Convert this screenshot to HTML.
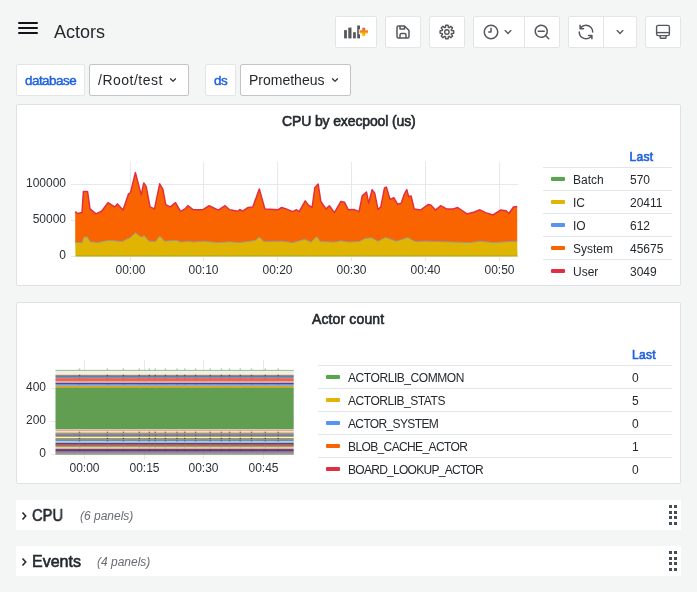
<!DOCTYPE html>
<html><head><meta charset="utf-8">
<style>
*{box-sizing:border-box;margin:0;padding:0}
html,body{width:697px;height:592px;overflow:hidden;background:#f4f5f5;font-family:"Liberation Sans",sans-serif;color:#24292e}
.abs{position:absolute}
.btn{position:absolute;top:16px;height:32px;background:#fff;border:1px solid #e4e5e6;border-radius:2px}
.sep{position:absolute;top:0;bottom:0;width:1px;background:#e4e5e6}
.panel{position:absolute;left:16px;width:665px;background:#fff;border:1px solid #e0e1e2;border-radius:2px}
.t{position:absolute;white-space:nowrap;line-height:1;will-change:transform}
.lbl{position:absolute;top:64px;height:32px;background:#fff;border:1px solid #e4e5e6;border-radius:2px}
.dd{position:absolute;top:64px;height:32px;background:#fff;border:1px solid #c2c4c6;border-radius:2px}
.row{position:absolute;left:16px;width:665px;height:30px;background:#fff}
.ic{position:absolute;fill:#464c54}
svg{overflow:visible}
.top{will-change:transform}
.ax{font-size:12px;fill:#2c3136;font-family:"Liberation Sans",sans-serif}
.lg{font-size:12px;fill:#24292e;font-family:"Liberation Sans",sans-serif}
</style></head><body>
<!-- header -->
<div class="abs" style="left:18px;top:22px;width:20px;height:2px;background:#111418;border-radius:1px"></div>
<div class="abs" style="left:18px;top:27px;width:20px;height:2px;background:#111418;border-radius:1px"></div>
<div class="abs" style="left:18px;top:32px;width:20px;height:2px;background:#111418;border-radius:1px"></div>
<div class="t" style="left:54px;top:23px;font-size:18px">Actors</div>

<!-- toolbar -->
<div class="btn" style="left:335px;width:42px"></div>
<div class="btn" style="left:385px;width:36px"></div>
<div class="btn" style="left:429px;width:36px"></div>
<div class="btn" style="left:473px;width:87px"><div class="sep" style="left:50px"></div></div>
<div class="btn" style="left:568px;width:69px"><div class="sep" style="left:34px"></div></div>
<div class="btn" style="left:645px;width:36px"></div>

<!-- variables -->
<div class="lbl" style="left:16px;width:69px"></div>
<div class="t" style="left:25px;top:73.5px;font-size:13.4px;-webkit-text-stroke:0.45px #1f62e0;color:#1f62e0;letter-spacing:-0.5px">database</div>
<div class="dd" style="left:89px;width:100px"></div>
<div class="t" style="left:98px;top:73px;font-size:14px;letter-spacing:0.5px">/Root/test</div>
<div class="lbl" style="left:205px;width:31px"></div>
<div class="t" style="left:214px;top:73.5px;font-size:13.4px;-webkit-text-stroke:0.45px #1f62e0;color:#1f62e0;letter-spacing:-0.5px">ds</div>
<div class="dd" style="left:240px;width:111px"></div>
<div class="t" style="left:249px;top:73px;font-size:14px">Prometheus</div>

<!-- panel 1 -->
<div class="panel" style="top:104px;height:182px"></div>
<div class="t" style="left:282px;top:114px;font-size:14px;-webkit-text-stroke:0.6px #24292e;letter-spacing:-0.13px">CPU by execpool (us)</div>

<!-- panel 2 -->
<div class="panel" style="top:302px;height:182px"></div>
<div class="t" style="left:312px;top:312px;font-size:14px;-webkit-text-stroke:0.6px #24292e;letter-spacing:0.13px">Actor count</div>

<!-- rows -->
<div class="row" style="top:500px"></div>
<div class="t" style="left:32px;top:508px;font-size:16px;-webkit-text-stroke:0.6px #24292e;transform:scaleX(0.92);transform-origin:0 0">CPU</div>
<div class="t" style="left:80px;top:510px;font-size:12px;font-style:italic;color:#686c70">(6 panels)</div>
<div class="row" style="top:546px"></div>
<div class="t" style="left:32px;top:554px;font-size:16px;-webkit-text-stroke:0.6px #24292e">Events</div>
<div class="t" style="left:97px;top:556px;font-size:12px;font-style:italic;color:#686c70">(4 panels)</div>

<svg class="abs top" style="left:0;top:0" width="697" height="592" viewBox="0 0 697 592">
<!-- toolbar icons -->
<g>
 <rect x="344.1" y="30.1" width="2.8" height="8.3" fill="#54585d"/>
 <rect x="348.3" y="27.6" width="3.2" height="10.8" fill="#54585d"/>
 <rect x="353.1" y="32.2" width="2.7" height="6.2" fill="#54585d"/>
 <rect x="357.2" y="25.5" width="2.8" height="12.9" fill="#54585d"/>
 <defs><linearGradient id="og" x1="0" y1="0" x2="0" y2="1"><stop offset="0" stop-color="#F05A28"/><stop offset="1" stop-color="#FBCA0A"/></linearGradient></defs>
 <rect x="358.8" y="29.3" width="1.6" height="5" fill="#fff"/>
 <rect x="359.5" y="30.4" width="8.5" height="3" fill="url(#og)"/>
 <rect x="362.2" y="27.8" width="3" height="8.2" fill="url(#og)"/>
</g>
<svg x="394" y="23" width="18" height="18" viewBox="0 0 24 24"><path fill="#54585d" d="M20.71,9.29l-6-6a1,1,0,0,0-.32-.21A1.09,1.09,0,0,0,14,3H6A3,3,0,0,0,3,6V18a3,3,0,0,0,3,3H18a3,3,0,0,0,3-3V10A1,1,0,0,0,20.71,9.29ZM9,5h4V7H9Zm6,14H9V16a1,1,0,0,1,1-1h4a1,1,0,0,1,1,1Zm4-1a1,1,0,0,1-1,1H17V16a3,3,0,0,0-3-3H10a3,3,0,0,0-3,3v3H6a1,1,0,0,1-1-1V6A1,1,0,0,1,6,5H7V8A1,1,0,0,0,8,9h6a1,1,0,0,0,1-1V6.41l4,4Z"/></svg>
<g fill="none" stroke="#54585d" stroke-width="1.4" stroke-linejoin="round"><path d="M445.02,27.47 L445.47,27.31 L445.70,25.20 L448.10,25.20 L448.33,27.31 L448.78,27.47 L449.20,27.67 L450.86,26.35 L452.55,28.04 L451.23,29.70 L451.43,30.12 L451.59,30.57 L453.70,30.80 L453.70,33.20 L451.59,33.43 L451.43,33.88 L451.23,34.30 L452.55,35.96 L450.86,37.65 L449.20,36.33 L448.78,36.53 L448.33,36.69 L448.10,38.80 L445.70,38.80 L445.47,36.69 L445.02,36.53 L444.60,36.33 L442.94,37.65 L441.25,35.96 L442.57,34.30 L442.37,33.88 L442.21,33.43 L440.10,33.20 L440.10,30.80 L442.21,30.57 L442.37,30.12 L442.57,29.70 L441.25,28.04 L442.94,26.35 L444.60,27.67 Z"/><circle cx="446.9" cy="32" r="2.2"/></g>
<svg x="482" y="23" width="18" height="18" viewBox="0 0 24 24"><path fill="#54585d" d="M12,2A10,10,0,1,0,22,12,10.01114,10.01114,0,0,0,12,2Zm0,18a8,8,0,1,1,8-8A8.00917,8.00917,0,0,1,12,20Zm0-14a1,1,0,0,0-1,1v4H9a1,1,0,0,0,0,2h3a1,1,0,0,0,1-1V7A1,1,0,0,0,12,6Z"/></svg>
<svg x="500" y="24" width="16" height="16" viewBox="0 0 24 24"><path fill="#54585d" d="M17,9.17a1,1,0,0,0-1.41,0L12,12.71,8.46,9.17a1,1,0,0,0-1.41,0,1,1,0,0,0,0,1.42l4.24,4.24a1,1,0,0,0,1.42,0L17,10.59A1,1,0,0,0,17,9.17Z"/></svg>
<svg x="533" y="23" width="18" height="18" viewBox="0 0 24 24"><path fill="#54585d" d="M21.71,20.29,18,16.61A9,9,0,1,0,16.61,18l3.68,3.68a1,1,0,0,0,1.42,0A1,1,0,0,0,21.71,20.29ZM11,18a7,7,0,1,1,7-7A7,7,0,0,1,11,18Zm4-8H7a1,1,0,0,0,0,2h8a1,1,0,0,0,0-2Z"/></svg>
<svg x="577" y="23" width="18" height="18" viewBox="0 0 24 24"><path fill="#54585d" d="M19.91,15.51H15.38a1,1,0,0,0,0,2h2.4A8,8,0,0,1,4,12a1,1,0,0,0-2,0,10,10,0,0,0,16.88,7.23V21a1,1,0,0,0,2,0V16.5A1,1,0,0,0,19.91,15.51ZM12,2A10,10,0,0,0,5.12,4.77V3a1,1,0,0,0-2,0V7.5a1,1,0,0,0,1,1h4.5a1,1,0,0,0,0-2H6.22A8,8,0,0,1,20,12a1,1,0,0,0,2,0A10,10,0,0,0,12,2Z"/></svg>
<svg x="612" y="24" width="16" height="16" viewBox="0 0 24 24"><path fill="#54585d" d="M17,9.17a1,1,0,0,0-1.41,0L12,12.71,8.46,9.17a1,1,0,0,0-1.41,0,1,1,0,0,0,0,1.42l4.24,4.24a1,1,0,0,0,1.42,0L17,10.59A1,1,0,0,0,17,9.17Z"/></svg>
<g fill="none" stroke="#54585d" stroke-width="1.4">
 <rect x="656.6" y="25.4" width="12.8" height="10.2" rx="1.6"/>
 <line x1="656.6" y1="32.6" x2="669.4" y2="32.6"/>
 <path d="M660.2,35.6 V37.4 Q660.2,38.2 661,38.2 H665.2 Q666,38.2 666,37.4 V35.6"/>
</g>
<!-- variable chevrons -->
<svg x="166" y="73" width="14" height="14" viewBox="0 0 24 24"><path fill="#24292e" d="M17,9.17a1,1,0,0,0-1.41,0L12,12.71,8.46,9.17a1,1,0,0,0-1.41,0,1,1,0,0,0,0,1.42l4.24,4.24a1,1,0,0,0,1.42,0L17,10.59A1,1,0,0,0,17,9.17Z"/></svg>
<svg x="328" y="73" width="14" height="14" viewBox="0 0 24 24"><path fill="#24292e" d="M17,9.17a1,1,0,0,0-1.41,0L12,12.71,8.46,9.17a1,1,0,0,0-1.41,0,1,1,0,0,0,0,1.42l4.24,4.24a1,1,0,0,0,1.42,0L17,10.59A1,1,0,0,0,17,9.17Z"/></svg>

<!-- chart 1 grid -->
<g stroke="#e8e8ea" stroke-width="1">
 <line x1="71" y1="184.5" x2="518" y2="184.5"/>
 <line x1="71" y1="220.5" x2="518" y2="220.5"/>
 <line x1="71" y1="256.5" x2="518" y2="256.5"/>
 <line x1="130.5" y1="162" x2="130.5" y2="261"/>
 <line x1="203.5" y1="162" x2="203.5" y2="261"/>
 <line x1="277.5" y1="162" x2="277.5" y2="261"/>
 <line x1="351.5" y1="162" x2="351.5" y2="261"/>
 <line x1="425.5" y1="162" x2="425.5" y2="261"/>
 <line x1="499.5" y1="162" x2="499.5" y2="261"/>
</g>
<polygon fill="#FA6400" points="75.2,211.7 77.4,213.6 82.0,212.7 83.4,191.7 87.6,191.7 90.0,209.0 96.0,214.0 101.6,211.4 108.0,202.8 114.6,207.0 117.4,204.0 123.0,210.2 128.5,194.0 130.4,193.0 135.4,172.7 141.2,195.0 143.8,183.0 146.2,186.7 150.0,207.0 154.5,209.0 159.7,183.9 162.9,189.4 165.7,204.7 170.3,207.0 175.5,202.8 180.5,211.4 185.0,209.0 187.8,205.8 193.4,209.9 202.6,209.9 209.1,205.8 218.4,210.2 225.0,205.8 229.6,209.9 238.0,211.4 239.8,209.5 242.6,211.2 248.2,207.6 252.8,207.1 259.3,189.0 264.9,209.0 274.2,209.5 277.9,209.9 281.6,207.6 286.2,209.0 292.7,211.7 296.5,209.9 299.2,211.7 305.2,201.0 308.4,205.2 312.1,207.6 314.9,187.6 318.2,184.2 320.8,201.5 326.0,209.0 329.4,205.8 334.4,212.7 340.9,201.5 344.6,202.4 348.3,209.9 353.9,209.5 359.1,211.7 362.2,196.0 366.5,192.2 368.7,203.4 372.1,189.8 374.7,193.2 378.0,209.5 380.8,207.1 384.5,188.0 386.4,187.2 390.1,199.7 393.8,197.8 397.5,204.3 401.2,203.4 404.0,195.0 406.8,189.8 408.7,196.9 411.1,196.0 414.2,209.0 420.6,210.2 428.0,204.7 430.8,205.2 435.4,210.2 440.6,205.8 446.6,209.0 453.1,209.0 457.7,207.6 467.0,214.0 474.4,212.1 480.0,209.9 485.6,212.7 493.0,215.1 500.5,210.2 506.0,210.8 508.8,213.6 513.5,207.1 517.2,206.5 517.2,242.5 493.0,243.9 480.0,242.5 470.7,243.9 442.9,243.0 426.1,242.5 415.2,242.8 407.7,238.7 396.6,242.5 385.5,238.7 378.0,242.5 371.5,239.1 365.0,239.7 359.4,242.8 348.3,243.4 340.9,242.1 334.4,243.4 320.4,242.8 316.7,237.8 311.1,243.4 304.8,240.6 292.7,243.9 281.6,242.5 264.0,242.8 259.3,238.4 255.6,241.5 250.0,242.5 238.9,243.9 229.6,243.0 218.4,243.9 203.6,242.5 192.4,243.4 188.9,242.5 181.5,243.4 175.9,241.5 164.7,242.5 159.7,237.3 155.5,242.8 149.0,242.5 144.3,236.9 141.2,238.4 135.4,234.0 130.4,238.7 122.0,242.8 109.0,241.5 97.9,243.8 90.0,243.0 87.6,238.2 84.0,238.2 82.0,244.0 75.2,243.4"/>
<polygon fill="#E0B400" points="75.5,256.5 75.2,242.1 82.0,242.7 84.0,236.9 87.6,236.9 90.0,241.7 97.9,242.5 109.0,240.2 122.0,241.5 130.4,237.4 135.4,232.7 141.2,237.1 144.3,235.6 149.0,241.2 155.5,241.5 159.7,236.0 164.7,241.2 175.9,240.2 181.5,242.1 188.9,241.2 192.4,242.1 203.6,241.2 218.4,242.6 229.6,241.7 238.9,242.6 250.0,241.2 255.6,240.2 259.3,237.1 264.0,241.5 281.6,241.2 292.7,242.6 304.8,239.3 311.1,242.1 316.7,236.5 320.4,241.5 334.4,242.1 340.9,240.8 348.3,242.1 359.4,241.5 365.0,238.4 371.5,237.8 378.0,241.2 385.5,237.4 396.6,241.2 407.7,237.4 415.2,241.5 426.1,241.2 442.9,241.7 470.7,242.6 480.0,241.2 493.0,242.6 517.2,241.2 517.5,256.5"/>
<polyline fill="none" stroke="#8c9aa6" stroke-width="0.9" points="75.2,242.1 82.0,242.7 84.0,236.9 87.6,236.9 90.0,241.7 97.9,242.5 109.0,240.2 122.0,241.5 130.4,237.4 135.4,232.7 141.2,237.1 144.3,235.6 149.0,241.2 155.5,241.5 159.7,236.0 164.7,241.2 175.9,240.2 181.5,242.1 188.9,241.2 192.4,242.1 203.6,241.2 218.4,242.6 229.6,241.7 238.9,242.6 250.0,241.2 255.6,240.2 259.3,237.1 264.0,241.5 281.6,241.2 292.7,242.6 304.8,239.3 311.1,242.1 316.7,236.5 320.4,241.5 334.4,242.1 340.9,240.8 348.3,242.1 359.4,241.5 365.0,238.4 371.5,237.8 378.0,241.2 385.5,237.4 396.6,241.2 407.7,237.4 415.2,241.5 426.1,241.2 442.9,241.7 470.7,242.6 480.0,241.2 493.0,242.6 517.2,241.2"/>
<polyline fill="none" stroke="#E02F44" stroke-width="1.5" stroke-linejoin="round" points="75.2,211.6 77.4,213.5 82.0,212.6 83.4,191.6 87.6,191.6 90.0,208.9 96.0,213.9 101.6,211.3 108.0,202.7 114.6,206.9 117.4,203.9 123.0,210.1 128.5,193.9 130.4,192.9 135.4,172.6 141.2,194.9 143.8,182.9 146.2,186.6 150.0,206.9 154.5,208.9 159.7,183.8 162.9,189.3 165.7,204.6 170.3,206.9 175.5,202.7 180.5,211.3 185.0,208.9 187.8,205.7 193.4,209.8 202.6,209.8 209.1,205.7 218.4,210.1 225.0,205.7 229.6,209.8 238.0,211.3 239.8,209.4 242.6,211.1 248.2,207.5 252.8,207.0 259.3,188.9 264.9,208.9 274.2,209.4 277.9,209.8 281.6,207.5 286.2,208.9 292.7,211.6 296.5,209.8 299.2,211.6 305.2,200.9 308.4,205.1 312.1,207.5 314.9,187.5 318.2,184.1 320.8,201.4 326.0,208.9 329.4,205.7 334.4,212.6 340.9,201.4 344.6,202.3 348.3,209.8 353.9,209.4 359.1,211.6 362.2,195.9 366.5,192.1 368.7,203.3 372.1,189.7 374.7,193.1 378.0,209.4 380.8,207.0 384.5,187.9 386.4,187.1 390.1,199.6 393.8,197.7 397.5,204.2 401.2,203.3 404.0,194.9 406.8,189.7 408.7,196.8 411.1,195.9 414.2,208.9 420.6,210.1 428.0,204.6 430.8,205.1 435.4,210.1 440.6,205.7 446.6,208.9 453.1,208.9 457.7,207.5 467.0,213.9 474.4,212.0 480.0,209.8 485.6,212.6 493.0,215.0 500.5,210.1 506.0,210.7 508.8,213.5 513.5,207.0 517.2,206.4"/>
<line x1="75.5" y1="255.8" x2="517.5" y2="255.8" stroke="#56A64B" stroke-width="0.8" opacity="0.5"/>
<g class="ax" text-anchor="end">
 <text x="66" y="186.5">100000</text>
 <text x="66" y="222.5">50000</text>
 <text x="66" y="258.5">0</text>
</g>
<g class="ax" text-anchor="middle">
 <text x="130.5" y="274">00:00</text>
 <text x="203.5" y="274">00:10</text>
 <text x="277.5" y="274">00:20</text>
 <text x="351.5" y="274">00:30</text>
 <text x="425.5" y="274">00:40</text>
 <text x="499.5" y="274">00:50</text>
</g>
<!-- legend 1 -->
<g stroke="#e4e5e6" stroke-width="1">
 <line x1="543" y1="167.5" x2="672" y2="167.5"/>
 <line x1="543" y1="190.5" x2="672" y2="190.5"/>
 <line x1="543" y1="213.5" x2="672" y2="213.5"/>
 <line x1="543" y1="236.5" x2="672" y2="236.5"/>
 <line x1="543" y1="259.5" x2="672" y2="259.5"/>
</g>
<text x="629.5" y="161" style="font-size:12px;fill:#1f62e0;stroke:#1f62e0;stroke-width:0.6px;letter-spacing:0.3px">Last</text>
<g>
 <rect x="551" y="177" width="14" height="4" rx="1" fill="#56A64B"/>
 <rect x="551" y="200" width="14" height="4" rx="1" fill="#E0B400"/>
 <rect x="551" y="223" width="14" height="4" rx="1" fill="#5794F2"/>
 <rect x="551" y="246" width="14" height="4" rx="1" fill="#FA6400"/>
 <rect x="551" y="269" width="14" height="4" rx="1" fill="#E02F44"/>
</g>
<g class="lg">
 <text x="573" y="184">Batch</text><text x="630" y="184">570</text>
 <text x="573" y="207">IC</text><text x="630" y="207">20411</text>
 <text x="573" y="230">IO</text><text x="630" y="230">612</text>
 <text x="573" y="253">System</text><text x="630" y="253">45675</text>
 <text x="573" y="276">User</text><text x="630" y="276">3049</text>
</g>

<!-- chart 2 grid -->
<g stroke="#e8e8ea" stroke-width="1">
 <line x1="51" y1="388.5" x2="294" y2="388.5"/>
 <line x1="51" y1="421.5" x2="294" y2="421.5"/>
 <line x1="51" y1="454.5" x2="294" y2="454.5"/>
 <line x1="84.5" y1="360" x2="84.5" y2="459"/>
 <line x1="144.5" y1="360" x2="144.5" y2="459"/>
 <line x1="203.5" y1="360" x2="203.5" y2="459"/>
 <line x1="263.5" y1="360" x2="263.5" y2="459"/>
</g>
<rect x="55.5" y="369.9" width="238.2" height="0.90" fill="#6DAF5F"/>
<rect x="55.5" y="370.8" width="238.2" height="0.90" fill="#EEE4F0"/>
<rect x="55.5" y="371.7" width="238.2" height="1.30" fill="#F8E8E4"/>
<rect x="55.5" y="373.0" width="238.2" height="1.80" fill="#F2F4E0"/>
<rect x="55.5" y="374.8" width="238.2" height="0.90" fill="#8B7B8B"/>
<rect x="55.5" y="375.7" width="238.2" height="1.10" fill="#7A4A20"/>
<rect x="55.5" y="376.8" width="238.2" height="1.30" fill="#5A9AE0"/>
<rect x="55.5" y="378.1" width="238.2" height="3.50" fill="#EE6258"/>
<rect x="55.5" y="381.6" width="238.2" height="1.30" fill="#A0C8A8"/>
<rect x="55.5" y="382.9" width="238.2" height="1.80" fill="#7030A0"/>
<rect x="55.5" y="384.7" width="238.2" height="1.30" fill="#70B8E0"/>
<rect x="55.5" y="386.0" width="238.2" height="2.00" fill="#C8A830"/>
<rect x="55.5" y="388.0" width="238.2" height="41.10" fill="#629E51"/>
<rect x="55.5" y="429.1" width="238.2" height="0.70" fill="#B8C8B0"/>
<rect x="55.5" y="429.8" width="238.2" height="1.20" fill="#F2A285"/>
<rect x="55.5" y="431.0" width="238.2" height="0.80" fill="#E8E4C8"/>
<rect x="55.5" y="431.8" width="238.2" height="1.00" fill="#D8D0A8"/>
<rect x="55.5" y="432.8" width="238.2" height="0.90" fill="#A08050"/>
<rect x="55.5" y="433.7" width="238.2" height="1.00" fill="#4F7F4F"/>
<rect x="55.5" y="434.7" width="238.2" height="1.20" fill="#7F58B8"/>
<rect x="55.5" y="435.9" width="238.2" height="1.10" fill="#B0A830"/>
<rect x="55.5" y="437.0" width="238.2" height="1.30" fill="#F0F0F0"/>
<rect x="55.5" y="438.3" width="238.2" height="1.40" fill="#7A6A30"/>
<rect x="55.5" y="439.7" width="238.2" height="1.50" fill="#4A98D8"/>
<rect x="55.5" y="441.2" width="238.2" height="0.60" fill="#C8A8B0"/>
<rect x="55.5" y="441.8" width="238.2" height="1.10" fill="#A8C8A8"/>
<rect x="55.5" y="442.9" width="238.2" height="1.90" fill="#5C3E98"/>
<rect x="55.5" y="444.8" width="238.2" height="1.10" fill="#C85018"/>
<rect x="55.5" y="445.9" width="238.2" height="1.10" fill="#A8A050"/>
<rect x="55.5" y="447.0" width="238.2" height="0.80" fill="#D8C8C8"/>
<rect x="55.5" y="447.8" width="238.2" height="1.30" fill="#F0A890"/>
<rect x="55.5" y="449.1" width="238.2" height="2.50" fill="#52407A"/>
<rect x="55.5" y="451.6" width="238.2" height="0.80" fill="#8A5840"/>
<rect x="55.5" y="452.4" width="238.2" height="1.30" fill="#8855A0"/>
<rect x="55.5" y="453.7" width="238.2" height="1.10" fill="#7EB26D"/>
<rect x="78.8" y="368.5" width="1.4" height="1.4" fill="#56A64B" opacity="0.55"/>
<rect x="78.8" y="374.7" width="1.4" height="1.4" fill="#2a2030" opacity="0.55"/>
<rect x="78.8" y="377.8" width="1.4" height="1.4" fill="#E24D42" opacity="0.55"/>
<rect x="78.8" y="383.0" width="1.4" height="1.4" fill="#8a2a9a" opacity="0.55"/>
<rect x="78.8" y="385.7" width="1.4" height="1.4" fill="#E5AC0E" opacity="0.55"/>
<rect x="78.8" y="431.6" width="1.4" height="1.4" fill="#3a2a50" opacity="0.55"/>
<rect x="78.8" y="434.4" width="1.4" height="1.4" fill="#6040a0" opacity="0.55"/>
<rect x="78.8" y="437.7" width="1.4" height="1.4" fill="#1a1420" opacity="0.55"/>
<rect x="78.8" y="440.2" width="1.4" height="1.4" fill="#5a40a0" opacity="0.55"/>
<rect x="78.8" y="444.6" width="1.4" height="1.4" fill="#70a060" opacity="0.55"/>
<rect x="78.8" y="446.8" width="1.4" height="1.4" fill="#c0a0d8" opacity="0.55"/>
<rect x="78.8" y="449.8" width="1.4" height="1.4" fill="#40305a" opacity="0.55"/>
<rect x="106.7" y="368.5" width="1.4" height="1.4" fill="#56A64B" opacity="0.55"/>
<rect x="106.7" y="374.7" width="1.4" height="1.4" fill="#2a2030" opacity="0.55"/>
<rect x="106.7" y="377.8" width="1.4" height="1.4" fill="#E24D42" opacity="0.55"/>
<rect x="106.7" y="383.0" width="1.4" height="1.4" fill="#8a2a9a" opacity="0.55"/>
<rect x="106.7" y="385.7" width="1.4" height="1.4" fill="#E5AC0E" opacity="0.55"/>
<rect x="106.7" y="431.6" width="1.4" height="1.4" fill="#3a2a50" opacity="0.55"/>
<rect x="106.7" y="434.4" width="1.4" height="1.4" fill="#6040a0" opacity="0.55"/>
<rect x="106.7" y="437.7" width="1.4" height="1.4" fill="#1a1420" opacity="0.55"/>
<rect x="106.7" y="440.2" width="1.4" height="1.4" fill="#5a40a0" opacity="0.55"/>
<rect x="106.7" y="444.6" width="1.4" height="1.4" fill="#70a060" opacity="0.55"/>
<rect x="106.7" y="446.8" width="1.4" height="1.4" fill="#c0a0d8" opacity="0.55"/>
<rect x="106.7" y="449.8" width="1.4" height="1.4" fill="#40305a" opacity="0.55"/>
<rect x="122.7" y="368.5" width="1.4" height="1.4" fill="#56A64B" opacity="0.55"/>
<rect x="122.7" y="374.7" width="1.4" height="1.4" fill="#2a2030" opacity="0.55"/>
<rect x="122.7" y="377.8" width="1.4" height="1.4" fill="#E24D42" opacity="0.55"/>
<rect x="122.7" y="383.0" width="1.4" height="1.4" fill="#8a2a9a" opacity="0.55"/>
<rect x="122.7" y="385.7" width="1.4" height="1.4" fill="#E5AC0E" opacity="0.55"/>
<rect x="122.7" y="431.6" width="1.4" height="1.4" fill="#3a2a50" opacity="0.55"/>
<rect x="122.7" y="434.4" width="1.4" height="1.4" fill="#6040a0" opacity="0.55"/>
<rect x="122.7" y="437.7" width="1.4" height="1.4" fill="#1a1420" opacity="0.55"/>
<rect x="122.7" y="440.2" width="1.4" height="1.4" fill="#5a40a0" opacity="0.55"/>
<rect x="122.7" y="444.6" width="1.4" height="1.4" fill="#70a060" opacity="0.55"/>
<rect x="122.7" y="446.8" width="1.4" height="1.4" fill="#c0a0d8" opacity="0.55"/>
<rect x="122.7" y="449.8" width="1.4" height="1.4" fill="#40305a" opacity="0.55"/>
<rect x="138.6" y="368.5" width="1.4" height="1.4" fill="#56A64B" opacity="0.55"/>
<rect x="138.6" y="374.7" width="1.4" height="1.4" fill="#2a2030" opacity="0.55"/>
<rect x="138.6" y="377.8" width="1.4" height="1.4" fill="#E24D42" opacity="0.55"/>
<rect x="138.6" y="383.0" width="1.4" height="1.4" fill="#8a2a9a" opacity="0.55"/>
<rect x="138.6" y="385.7" width="1.4" height="1.4" fill="#E5AC0E" opacity="0.55"/>
<rect x="138.6" y="431.6" width="1.4" height="1.4" fill="#3a2a50" opacity="0.55"/>
<rect x="138.6" y="434.4" width="1.4" height="1.4" fill="#6040a0" opacity="0.55"/>
<rect x="138.6" y="437.7" width="1.4" height="1.4" fill="#1a1420" opacity="0.55"/>
<rect x="138.6" y="440.2" width="1.4" height="1.4" fill="#5a40a0" opacity="0.55"/>
<rect x="138.6" y="444.6" width="1.4" height="1.4" fill="#70a060" opacity="0.55"/>
<rect x="138.6" y="446.8" width="1.4" height="1.4" fill="#c0a0d8" opacity="0.55"/>
<rect x="138.6" y="449.8" width="1.4" height="1.4" fill="#40305a" opacity="0.55"/>
<rect x="148.6" y="368.5" width="1.4" height="1.4" fill="#56A64B" opacity="0.55"/>
<rect x="148.6" y="374.7" width="1.4" height="1.4" fill="#2a2030" opacity="0.55"/>
<rect x="148.6" y="377.8" width="1.4" height="1.4" fill="#E24D42" opacity="0.55"/>
<rect x="148.6" y="383.0" width="1.4" height="1.4" fill="#8a2a9a" opacity="0.55"/>
<rect x="148.6" y="385.7" width="1.4" height="1.4" fill="#E5AC0E" opacity="0.55"/>
<rect x="148.6" y="431.6" width="1.4" height="1.4" fill="#3a2a50" opacity="0.55"/>
<rect x="148.6" y="434.4" width="1.4" height="1.4" fill="#6040a0" opacity="0.55"/>
<rect x="148.6" y="437.7" width="1.4" height="1.4" fill="#1a1420" opacity="0.55"/>
<rect x="148.6" y="440.2" width="1.4" height="1.4" fill="#5a40a0" opacity="0.55"/>
<rect x="148.6" y="444.6" width="1.4" height="1.4" fill="#70a060" opacity="0.55"/>
<rect x="148.6" y="446.8" width="1.4" height="1.4" fill="#c0a0d8" opacity="0.55"/>
<rect x="148.6" y="449.8" width="1.4" height="1.4" fill="#40305a" opacity="0.55"/>
<rect x="154.6" y="368.5" width="1.4" height="1.4" fill="#56A64B" opacity="0.55"/>
<rect x="154.6" y="374.7" width="1.4" height="1.4" fill="#2a2030" opacity="0.55"/>
<rect x="154.6" y="377.8" width="1.4" height="1.4" fill="#E24D42" opacity="0.55"/>
<rect x="154.6" y="383.0" width="1.4" height="1.4" fill="#8a2a9a" opacity="0.55"/>
<rect x="154.6" y="385.7" width="1.4" height="1.4" fill="#E5AC0E" opacity="0.55"/>
<rect x="154.6" y="431.6" width="1.4" height="1.4" fill="#3a2a50" opacity="0.55"/>
<rect x="154.6" y="434.4" width="1.4" height="1.4" fill="#6040a0" opacity="0.55"/>
<rect x="154.6" y="437.7" width="1.4" height="1.4" fill="#1a1420" opacity="0.55"/>
<rect x="154.6" y="440.2" width="1.4" height="1.4" fill="#5a40a0" opacity="0.55"/>
<rect x="154.6" y="444.6" width="1.4" height="1.4" fill="#70a060" opacity="0.55"/>
<rect x="154.6" y="446.8" width="1.4" height="1.4" fill="#c0a0d8" opacity="0.55"/>
<rect x="154.6" y="449.8" width="1.4" height="1.4" fill="#40305a" opacity="0.55"/>
<rect x="164.7" y="368.5" width="1.4" height="1.4" fill="#56A64B" opacity="0.55"/>
<rect x="164.7" y="374.7" width="1.4" height="1.4" fill="#2a2030" opacity="0.55"/>
<rect x="164.7" y="377.8" width="1.4" height="1.4" fill="#E24D42" opacity="0.55"/>
<rect x="164.7" y="383.0" width="1.4" height="1.4" fill="#8a2a9a" opacity="0.55"/>
<rect x="164.7" y="385.7" width="1.4" height="1.4" fill="#E5AC0E" opacity="0.55"/>
<rect x="164.7" y="431.6" width="1.4" height="1.4" fill="#3a2a50" opacity="0.55"/>
<rect x="164.7" y="434.4" width="1.4" height="1.4" fill="#6040a0" opacity="0.55"/>
<rect x="164.7" y="437.7" width="1.4" height="1.4" fill="#1a1420" opacity="0.55"/>
<rect x="164.7" y="440.2" width="1.4" height="1.4" fill="#5a40a0" opacity="0.55"/>
<rect x="164.7" y="444.6" width="1.4" height="1.4" fill="#70a060" opacity="0.55"/>
<rect x="164.7" y="446.8" width="1.4" height="1.4" fill="#c0a0d8" opacity="0.55"/>
<rect x="164.7" y="449.8" width="1.4" height="1.4" fill="#40305a" opacity="0.55"/>
<rect x="176.3" y="368.5" width="1.4" height="1.4" fill="#56A64B" opacity="0.55"/>
<rect x="176.3" y="374.7" width="1.4" height="1.4" fill="#2a2030" opacity="0.55"/>
<rect x="176.3" y="377.8" width="1.4" height="1.4" fill="#E24D42" opacity="0.55"/>
<rect x="176.3" y="383.0" width="1.4" height="1.4" fill="#8a2a9a" opacity="0.55"/>
<rect x="176.3" y="385.7" width="1.4" height="1.4" fill="#E5AC0E" opacity="0.55"/>
<rect x="176.3" y="431.6" width="1.4" height="1.4" fill="#3a2a50" opacity="0.55"/>
<rect x="176.3" y="434.4" width="1.4" height="1.4" fill="#6040a0" opacity="0.55"/>
<rect x="176.3" y="437.7" width="1.4" height="1.4" fill="#1a1420" opacity="0.55"/>
<rect x="176.3" y="440.2" width="1.4" height="1.4" fill="#5a40a0" opacity="0.55"/>
<rect x="176.3" y="444.6" width="1.4" height="1.4" fill="#70a060" opacity="0.55"/>
<rect x="176.3" y="446.8" width="1.4" height="1.4" fill="#c0a0d8" opacity="0.55"/>
<rect x="176.3" y="449.8" width="1.4" height="1.4" fill="#40305a" opacity="0.55"/>
<rect x="184.0" y="368.5" width="1.4" height="1.4" fill="#56A64B" opacity="0.55"/>
<rect x="184.0" y="374.7" width="1.4" height="1.4" fill="#2a2030" opacity="0.55"/>
<rect x="184.0" y="377.8" width="1.4" height="1.4" fill="#E24D42" opacity="0.55"/>
<rect x="184.0" y="383.0" width="1.4" height="1.4" fill="#8a2a9a" opacity="0.55"/>
<rect x="184.0" y="385.7" width="1.4" height="1.4" fill="#E5AC0E" opacity="0.55"/>
<rect x="184.0" y="431.6" width="1.4" height="1.4" fill="#3a2a50" opacity="0.55"/>
<rect x="184.0" y="434.4" width="1.4" height="1.4" fill="#6040a0" opacity="0.55"/>
<rect x="184.0" y="437.7" width="1.4" height="1.4" fill="#1a1420" opacity="0.55"/>
<rect x="184.0" y="440.2" width="1.4" height="1.4" fill="#5a40a0" opacity="0.55"/>
<rect x="184.0" y="444.6" width="1.4" height="1.4" fill="#70a060" opacity="0.55"/>
<rect x="184.0" y="446.8" width="1.4" height="1.4" fill="#c0a0d8" opacity="0.55"/>
<rect x="184.0" y="449.8" width="1.4" height="1.4" fill="#40305a" opacity="0.55"/>
<rect x="194.9" y="368.5" width="1.4" height="1.4" fill="#56A64B" opacity="0.55"/>
<rect x="194.9" y="374.7" width="1.4" height="1.4" fill="#2a2030" opacity="0.55"/>
<rect x="194.9" y="377.8" width="1.4" height="1.4" fill="#E24D42" opacity="0.55"/>
<rect x="194.9" y="383.0" width="1.4" height="1.4" fill="#8a2a9a" opacity="0.55"/>
<rect x="194.9" y="385.7" width="1.4" height="1.4" fill="#E5AC0E" opacity="0.55"/>
<rect x="194.9" y="431.6" width="1.4" height="1.4" fill="#3a2a50" opacity="0.55"/>
<rect x="194.9" y="434.4" width="1.4" height="1.4" fill="#6040a0" opacity="0.55"/>
<rect x="194.9" y="437.7" width="1.4" height="1.4" fill="#1a1420" opacity="0.55"/>
<rect x="194.9" y="440.2" width="1.4" height="1.4" fill="#5a40a0" opacity="0.55"/>
<rect x="194.9" y="444.6" width="1.4" height="1.4" fill="#70a060" opacity="0.55"/>
<rect x="194.9" y="446.8" width="1.4" height="1.4" fill="#c0a0d8" opacity="0.55"/>
<rect x="194.9" y="449.8" width="1.4" height="1.4" fill="#40305a" opacity="0.55"/>
<rect x="209.5" y="368.5" width="1.4" height="1.4" fill="#56A64B" opacity="0.55"/>
<rect x="209.5" y="374.7" width="1.4" height="1.4" fill="#2a2030" opacity="0.55"/>
<rect x="209.5" y="377.8" width="1.4" height="1.4" fill="#E24D42" opacity="0.55"/>
<rect x="209.5" y="383.0" width="1.4" height="1.4" fill="#8a2a9a" opacity="0.55"/>
<rect x="209.5" y="385.7" width="1.4" height="1.4" fill="#E5AC0E" opacity="0.55"/>
<rect x="209.5" y="431.6" width="1.4" height="1.4" fill="#3a2a50" opacity="0.55"/>
<rect x="209.5" y="434.4" width="1.4" height="1.4" fill="#6040a0" opacity="0.55"/>
<rect x="209.5" y="437.7" width="1.4" height="1.4" fill="#1a1420" opacity="0.55"/>
<rect x="209.5" y="440.2" width="1.4" height="1.4" fill="#5a40a0" opacity="0.55"/>
<rect x="209.5" y="444.6" width="1.4" height="1.4" fill="#70a060" opacity="0.55"/>
<rect x="209.5" y="446.8" width="1.4" height="1.4" fill="#c0a0d8" opacity="0.55"/>
<rect x="209.5" y="449.8" width="1.4" height="1.4" fill="#40305a" opacity="0.55"/>
<rect x="220.7" y="368.5" width="1.4" height="1.4" fill="#56A64B" opacity="0.55"/>
<rect x="220.7" y="374.7" width="1.4" height="1.4" fill="#2a2030" opacity="0.55"/>
<rect x="220.7" y="377.8" width="1.4" height="1.4" fill="#E24D42" opacity="0.55"/>
<rect x="220.7" y="383.0" width="1.4" height="1.4" fill="#8a2a9a" opacity="0.55"/>
<rect x="220.7" y="385.7" width="1.4" height="1.4" fill="#E5AC0E" opacity="0.55"/>
<rect x="220.7" y="431.6" width="1.4" height="1.4" fill="#3a2a50" opacity="0.55"/>
<rect x="220.7" y="434.4" width="1.4" height="1.4" fill="#6040a0" opacity="0.55"/>
<rect x="220.7" y="437.7" width="1.4" height="1.4" fill="#1a1420" opacity="0.55"/>
<rect x="220.7" y="440.2" width="1.4" height="1.4" fill="#5a40a0" opacity="0.55"/>
<rect x="220.7" y="444.6" width="1.4" height="1.4" fill="#70a060" opacity="0.55"/>
<rect x="220.7" y="446.8" width="1.4" height="1.4" fill="#c0a0d8" opacity="0.55"/>
<rect x="220.7" y="449.8" width="1.4" height="1.4" fill="#40305a" opacity="0.55"/>
<rect x="228.8" y="368.5" width="1.4" height="1.4" fill="#56A64B" opacity="0.55"/>
<rect x="228.8" y="374.7" width="1.4" height="1.4" fill="#2a2030" opacity="0.55"/>
<rect x="228.8" y="377.8" width="1.4" height="1.4" fill="#E24D42" opacity="0.55"/>
<rect x="228.8" y="383.0" width="1.4" height="1.4" fill="#8a2a9a" opacity="0.55"/>
<rect x="228.8" y="385.7" width="1.4" height="1.4" fill="#E5AC0E" opacity="0.55"/>
<rect x="228.8" y="431.6" width="1.4" height="1.4" fill="#3a2a50" opacity="0.55"/>
<rect x="228.8" y="434.4" width="1.4" height="1.4" fill="#6040a0" opacity="0.55"/>
<rect x="228.8" y="437.7" width="1.4" height="1.4" fill="#1a1420" opacity="0.55"/>
<rect x="228.8" y="440.2" width="1.4" height="1.4" fill="#5a40a0" opacity="0.55"/>
<rect x="228.8" y="444.6" width="1.4" height="1.4" fill="#70a060" opacity="0.55"/>
<rect x="228.8" y="446.8" width="1.4" height="1.4" fill="#c0a0d8" opacity="0.55"/>
<rect x="228.8" y="449.8" width="1.4" height="1.4" fill="#40305a" opacity="0.55"/>
<rect x="239.6" y="368.5" width="1.4" height="1.4" fill="#56A64B" opacity="0.55"/>
<rect x="239.6" y="374.7" width="1.4" height="1.4" fill="#2a2030" opacity="0.55"/>
<rect x="239.6" y="377.8" width="1.4" height="1.4" fill="#E24D42" opacity="0.55"/>
<rect x="239.6" y="383.0" width="1.4" height="1.4" fill="#8a2a9a" opacity="0.55"/>
<rect x="239.6" y="385.7" width="1.4" height="1.4" fill="#E5AC0E" opacity="0.55"/>
<rect x="239.6" y="431.6" width="1.4" height="1.4" fill="#3a2a50" opacity="0.55"/>
<rect x="239.6" y="434.4" width="1.4" height="1.4" fill="#6040a0" opacity="0.55"/>
<rect x="239.6" y="437.7" width="1.4" height="1.4" fill="#1a1420" opacity="0.55"/>
<rect x="239.6" y="440.2" width="1.4" height="1.4" fill="#5a40a0" opacity="0.55"/>
<rect x="239.6" y="444.6" width="1.4" height="1.4" fill="#70a060" opacity="0.55"/>
<rect x="239.6" y="446.8" width="1.4" height="1.4" fill="#c0a0d8" opacity="0.55"/>
<rect x="239.6" y="449.8" width="1.4" height="1.4" fill="#40305a" opacity="0.55"/>
<rect x="250.8" y="368.5" width="1.4" height="1.4" fill="#56A64B" opacity="0.55"/>
<rect x="250.8" y="374.7" width="1.4" height="1.4" fill="#2a2030" opacity="0.55"/>
<rect x="250.8" y="377.8" width="1.4" height="1.4" fill="#E24D42" opacity="0.55"/>
<rect x="250.8" y="383.0" width="1.4" height="1.4" fill="#8a2a9a" opacity="0.55"/>
<rect x="250.8" y="385.7" width="1.4" height="1.4" fill="#E5AC0E" opacity="0.55"/>
<rect x="250.8" y="431.6" width="1.4" height="1.4" fill="#3a2a50" opacity="0.55"/>
<rect x="250.8" y="434.4" width="1.4" height="1.4" fill="#6040a0" opacity="0.55"/>
<rect x="250.8" y="437.7" width="1.4" height="1.4" fill="#1a1420" opacity="0.55"/>
<rect x="250.8" y="440.2" width="1.4" height="1.4" fill="#5a40a0" opacity="0.55"/>
<rect x="250.8" y="444.6" width="1.4" height="1.4" fill="#70a060" opacity="0.55"/>
<rect x="250.8" y="446.8" width="1.4" height="1.4" fill="#c0a0d8" opacity="0.55"/>
<rect x="250.8" y="449.8" width="1.4" height="1.4" fill="#40305a" opacity="0.55"/>
<rect x="264.6" y="368.5" width="1.4" height="1.4" fill="#56A64B" opacity="0.55"/>
<rect x="264.6" y="374.7" width="1.4" height="1.4" fill="#2a2030" opacity="0.55"/>
<rect x="264.6" y="377.8" width="1.4" height="1.4" fill="#E24D42" opacity="0.55"/>
<rect x="264.6" y="383.0" width="1.4" height="1.4" fill="#8a2a9a" opacity="0.55"/>
<rect x="264.6" y="385.7" width="1.4" height="1.4" fill="#E5AC0E" opacity="0.55"/>
<rect x="264.6" y="431.6" width="1.4" height="1.4" fill="#3a2a50" opacity="0.55"/>
<rect x="264.6" y="434.4" width="1.4" height="1.4" fill="#6040a0" opacity="0.55"/>
<rect x="264.6" y="437.7" width="1.4" height="1.4" fill="#1a1420" opacity="0.55"/>
<rect x="264.6" y="440.2" width="1.4" height="1.4" fill="#5a40a0" opacity="0.55"/>
<rect x="264.6" y="444.6" width="1.4" height="1.4" fill="#70a060" opacity="0.55"/>
<rect x="264.6" y="446.8" width="1.4" height="1.4" fill="#c0a0d8" opacity="0.55"/>
<rect x="264.6" y="449.8" width="1.4" height="1.4" fill="#40305a" opacity="0.55"/>
<rect x="277.5" y="368.5" width="1.4" height="1.4" fill="#56A64B" opacity="0.55"/>
<rect x="277.5" y="374.7" width="1.4" height="1.4" fill="#2a2030" opacity="0.55"/>
<rect x="277.5" y="377.8" width="1.4" height="1.4" fill="#E24D42" opacity="0.55"/>
<rect x="277.5" y="383.0" width="1.4" height="1.4" fill="#8a2a9a" opacity="0.55"/>
<rect x="277.5" y="385.7" width="1.4" height="1.4" fill="#E5AC0E" opacity="0.55"/>
<rect x="277.5" y="431.6" width="1.4" height="1.4" fill="#3a2a50" opacity="0.55"/>
<rect x="277.5" y="434.4" width="1.4" height="1.4" fill="#6040a0" opacity="0.55"/>
<rect x="277.5" y="437.7" width="1.4" height="1.4" fill="#1a1420" opacity="0.55"/>
<rect x="277.5" y="440.2" width="1.4" height="1.4" fill="#5a40a0" opacity="0.55"/>
<rect x="277.5" y="444.6" width="1.4" height="1.4" fill="#70a060" opacity="0.55"/>
<rect x="277.5" y="446.8" width="1.4" height="1.4" fill="#c0a0d8" opacity="0.55"/>
<rect x="277.5" y="449.8" width="1.4" height="1.4" fill="#40305a" opacity="0.55"/>
<g class="ax" text-anchor="end">
 <text x="46" y="390.5">400</text>
 <text x="46" y="423.5">200</text>
 <text x="46" y="456.5">0</text>
</g>
<g class="ax" text-anchor="middle">
 <text x="84.5" y="472">00:00</text>
 <text x="144.5" y="472">00:15</text>
 <text x="203.5" y="472">00:30</text>
 <text x="263.5" y="472">00:45</text>
</g>
<!-- legend 2 -->
<g stroke="#e4e5e6" stroke-width="1">
 <line x1="318" y1="365.5" x2="672" y2="365.5"/>
 <line x1="318" y1="388.5" x2="672" y2="388.5"/>
 <line x1="318" y1="411.5" x2="672" y2="411.5"/>
 <line x1="318" y1="434.5" x2="672" y2="434.5"/>
 <line x1="318" y1="457.5" x2="672" y2="457.5"/>
</g>
<text x="632" y="359" style="font-size:12px;fill:#1f62e0;stroke:#1f62e0;stroke-width:0.6px;letter-spacing:0.3px">Last</text>
<g>
 <rect x="326" y="375" width="14" height="4" rx="1" fill="#56A64B"/>
 <rect x="326" y="398" width="14" height="4" rx="1" fill="#E0B400"/>
 <rect x="326" y="421" width="14" height="4" rx="1" fill="#5794F2"/>
 <rect x="326" y="444" width="14" height="4" rx="1" fill="#FA6400"/>
 <rect x="326" y="467" width="14" height="4" rx="1" fill="#E02F44"/>
</g>
<g class="lg">
 <text x="348" y="382" style="letter-spacing:-0.43px">ACTORLIB_COMMON</text><text x="632" y="382">0</text>
 <text x="348" y="405" style="letter-spacing:-0.46px">ACTORLIB_STATS</text><text x="632" y="405">5</text>
 <text x="348" y="428" style="letter-spacing:-0.64px">ACTOR_SYSTEM</text><text x="632" y="428">0</text>
 <text x="348" y="451" style="letter-spacing:-0.62px">BLOB_CACHE_ACTOR</text><text x="632" y="451">1</text>
 <text x="348" y="474" style="letter-spacing:-0.72px">BOARD_LOOKUP_ACTOR</text><text x="632" y="474">0</text>
</g>

<!-- row chevrons -->
<g fill="none" stroke="#24292e" stroke-width="1.6">
 <polyline points="22.5,512.5 25.7,516 22.5,519.5"/>
 <polyline points="22.5,558.5 25.7,562 22.5,565.5"/>
</g>
<!-- drag handles -->
<g fill="#464c54">
 <rect x="669" y="505" width="3" height="3"/><rect x="674" y="505" width="3" height="3"/>
 <rect x="669" y="511" width="3" height="3"/><rect x="674" y="511" width="3" height="3"/>
 <rect x="669" y="516" width="3" height="3"/><rect x="674" y="516" width="3" height="3"/>
 <rect x="669" y="522" width="3" height="3"/><rect x="674" y="522" width="3" height="3"/>
 <rect x="669" y="551" width="3" height="3"/><rect x="674" y="551" width="3" height="3"/>
 <rect x="669" y="557" width="3" height="3"/><rect x="674" y="557" width="3" height="3"/>
 <rect x="669" y="562" width="3" height="3"/><rect x="674" y="562" width="3" height="3"/>
 <rect x="669" y="568" width="3" height="3"/><rect x="674" y="568" width="3" height="3"/>
</g>
</svg>
</body></html>
